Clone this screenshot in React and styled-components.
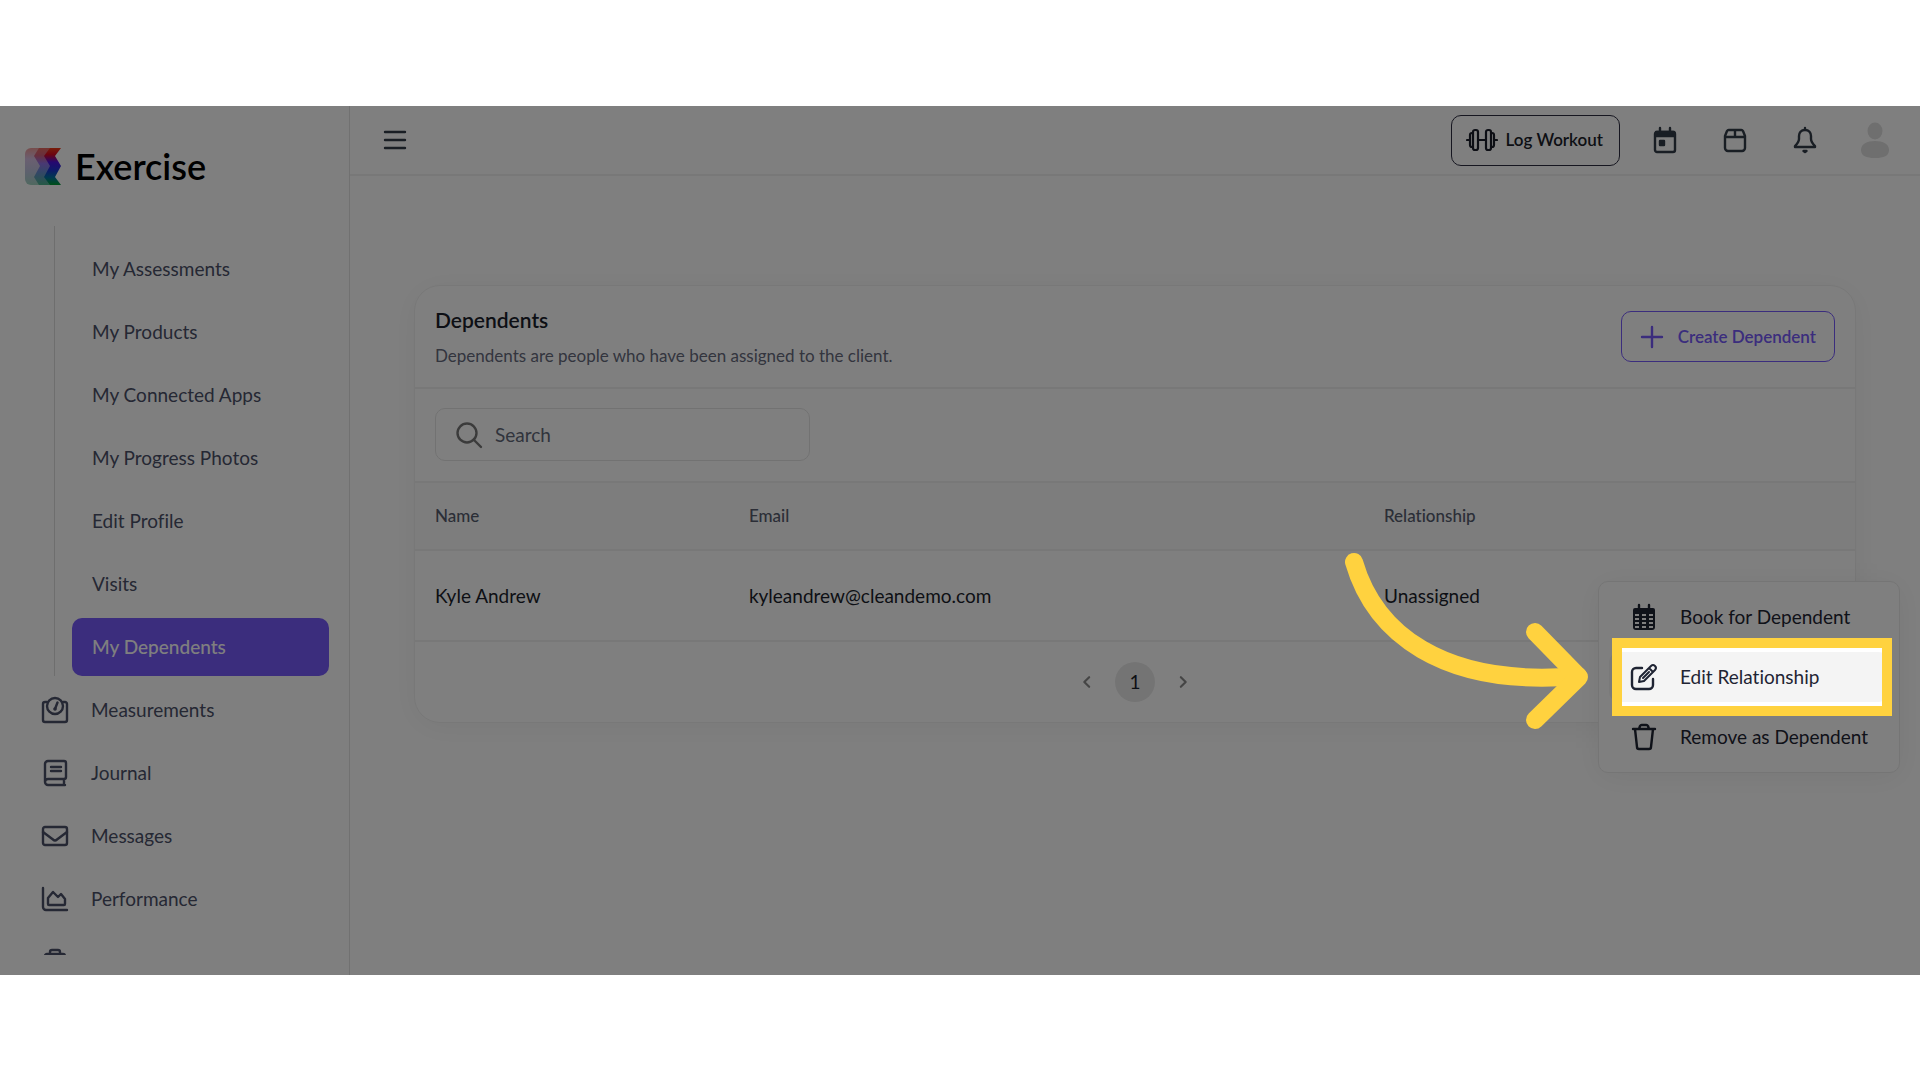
import React from "react";
import styled, { createGlobalStyle, css } from "styled-components";

const GlobalStyle = createGlobalStyle`
  * {
    box-sizing: border-box;
  }
  body {
    margin: 0;
    background: #ffffff;
    font-family: Lato, "Open Sans", sans-serif;
    font-size: 19px;
    line-height: 24px;
    font-variant-ligatures: none;
    color: #1b1e2b;
  }
  button,
  input {
    font: inherit;
    font-variant-ligatures: none;
    color: inherit;
  }
  h1,
  p,
  ul {
    margin: 0;
    padding: 0;
  }
`;

/* ---------- icons ---------- */

const Icon = ({ size = 26, stroke = 2.4, children }) => (
  <svg
    width={size}
    height={size}
    viewBox="0 0 26 26"
    fill="none"
    stroke="currentColor"
    strokeWidth={stroke}
    strokeLinecap="round"
    strokeLinejoin="round"
    overflow="visible"
    aria-hidden="true"
  >
    {children}
  </svg>
);

const LogoMark = () => (
  <svg width="36" height="37" viewBox="0 0 36 37" aria-hidden="true">
    <defs>
      <linearGradient id="bandOne" x1="0" y1="0" x2="0" y2="1">
        <stop offset="0" stopColor="#ee9a98" />
        <stop offset="0.3" stopColor="#d6bfe2" />
        <stop offset="0.65" stopColor="#bcc2dc" />
        <stop offset="1" stopColor="#a0d2c0" />
      </linearGradient>
      <linearGradient id="bandTwo" x1="0" y1="0" x2="0" y2="1">
        <stop offset="0" stopColor="#e8685e" />
        <stop offset="0.2" stopColor="#d0607c" />
        <stop offset="0.42" stopColor="#9272e8" />
        <stop offset="0.65" stopColor="#688cd0" />
        <stop offset="1" stopColor="#4cb48c" />
      </linearGradient>
      <linearGradient id="bandThree" x1="0" y1="0" x2="0" y2="1">
        <stop offset="0" stopColor="#f03a14" />
        <stop offset="0.18" stopColor="#d80820" />
        <stop offset="0.38" stopColor="#4c10e0" />
        <stop offset="0.6" stopColor="#1c34d4" />
        <stop offset="0.8" stopColor="#0074a0" />
        <stop offset="1" stopColor="#00a030" />
      </linearGradient>
    </defs>
    <path d="M6 0H24V37H6a6 6 0 0 1-6-6V6a6 6 0 0 1 6-6z" fill="url(#bandOne)" />
    <path d="M14 0H30V37H14L9 29 15 18 9 8z" fill="url(#bandTwo)" />
    <path d="M25 0H36L30 8 36 18 30 29 36 37H25L19 29 25 18 19 8z" fill="url(#bandThree)" />
  </svg>
);

const MenuIcon = () => (
  <Icon>
    <path d="M3 5h20M3 13h20M3 21h20" />
  </Icon>
);

const DumbbellIcon = () => (
  <svg
    width="32"
    height="24"
    viewBox="0 0 32 24"
    fill="none"
    stroke="currentColor"
    strokeWidth="2.2"
    strokeLinecap="round"
    aria-hidden="true"
  >
    <rect x="7" y="2" width="5" height="20" rx="2" />
    <rect x="20" y="2" width="5" height="20" rx="2" />
    <path d="M12 12h8M1 12h2M29 12h2M7 5H6a2 2 0 0 0-2 2v10a2 2 0 0 0 2 2h1M25 5h1a2 2 0 0 1 2 2v10a2 2 0 0 1-2 2h-1" />
  </svg>
);

const CalendarDayIcon = () => (
  <Icon>
    <rect x="3" y="5" width="20" height="20" rx="2" />
    <path d="M8 1v4M18 1v4" />
    <path d="M4 5h18v4H4z" fill="currentColor" />
    <path d="M8 14h4v4H8z" fill="currentColor" />
  </Icon>
);

const BoxIcon = () => (
  <Icon>
    <path d="M3 9v12a3 3 0 0 0 3 3h14a3 3 0 0 0 3-3V9l-2-5a2 2 0 0 0-2-1H7a2 2 0 0 0-2 1zM3 10h20M13 3v7" />
  </Icon>
);

const BellIcon = () => (
  <Icon>
    <path d="M13 1v2M13 3c-4 0-6 3-6 6v3c0 3-2 5-4 7v1h20v-1c-2-2-4-4-4-7V9c0-3-2-6-6-6z" />
    <path d="M11.500 24h3l-1.500 1z" fill="currentColor" />
  </Icon>
);

const AvatarIcon = () => (
  <svg width="28" height="36" viewBox="0 0 28 36" fill="#dedede" aria-hidden="true">
    <ellipse cx="14" cy="9" rx="7.500" ry="8.500" />
    <path d="M0 28c0-6 6-9 14-9s14 3 14 9-5 8-14 8-14-2-14-8z" />
  </svg>
);

const ScaleIcon = () => (
  <Icon>
    <path d="M5 5H3a2 2 0 0 0-2 2v16a2 2 0 0 0 2 2h20a2 2 0 0 0 2-2V7a2 2 0 0 0-2-2h-2" />
    <circle cx="13" cy="9" r="8" />
    <path d="M15.500 5.500L13 12" />
    <circle cx="13" cy="12" r="0.600" fill="currentColor" />
  </Icon>
);

const JournalIcon = () => (
  <Icon>
    <path d="M23 25H6a3 3 0 0 1-3-3V4a3 3 0 0 1 3-3h16a2 2 0 0 1 2 2v14a2 2 0 0 1-2 2H6a3 3 0 0 0-3 3M22 19v6" />
    <path d="M9 7h10M9 11h10" />
  </Icon>
);

const MailIcon = () => (
  <Icon>
    <rect x="1" y="4" width="24" height="18" rx="2" />
    <path d="M1 9l10 7.500a3 3 0 0 0 4 0L25 9" />
  </Icon>
);

const ChartIcon = () => (
  <Icon>
    <path d="M1 2v19a3 3 0 0 0 3 3h21" />
    <path d="M6 18v-6l5-6 5 5 3-3 4 5v5a1 1 0 0 1-1 1H7a1 1 0 0 1-1-1z" />
  </Icon>
);

const ClipboardIcon = () => (
  <Icon>
    <path d="M8 5V3a2 2 0 0 1 2-2h6a2 2 0 0 1 2 2v2M5 5h16a2 2 0 0 1 2 2v16a2 2 0 0 1-2 2H5a2 2 0 0 1-2-2V7a2 2 0 0 1 2-2z" />
  </Icon>
);

const PlusIcon = () => (
  <Icon>
    <path d="M13 3v20M3 13h20" />
  </Icon>
);

const SearchIcon = () => (
  <Icon>
    <circle cx="11" cy="11" r="9.500" />
    <path d="M17.500 17.500L25 25" />
  </Icon>
);

const CalendarGridIcon = () => (
  <Icon>
    <path
      d="M4 4h18a2 2 0 0 1 2 2v17a3 3 0 0 1-3 3H5a3 3 0 0 1-3-3V6a2 2 0 0 1 2-2z"
      fill="currentColor"
      stroke="none"
    />
    <path d="M8 1v4M18 1v4" />
    <path
      d="M4 11h4M11 11h4M18 11h4M4 15h4M11 15h4M18 15h4M4 19h4M11 19h4M18 19h4M4 23h4M11 23h4M18 23h4"
      stroke="#ffffff"
      strokeWidth="1.800"
      strokeLinecap="butt"
    />
  </Icon>
);

const EditIcon = () => (
  <Icon>
    <path d="M11 4H5a4 4 0 0 0-4 4v13a4 4 0 0 0 4 4h13a4 4 0 0 0 4-4v-6" />
    <path d="M8 18l1-5L20 2a2.500 2.500 0 0 1 4 4L13 17zM18 4l4 4M12 14l6-6" strokeWidth="2" />
  </Icon>
);

const TrashIcon = () => (
  <Icon>
    <path d="M2 5h22M4 5l2 18a2 2 0 0 0 2 2h10a2 2 0 0 0 2-2l2-18M8 5l1-3a2 2 0 0 1 2-1h4a2 2 0 0 1 2 1l1 3" />
  </Icon>
);

const ChevronLeft = () => (
  <Icon size={14} stroke={4}>
    <path d="M17 4l-9 9 9 9" />
  </Icon>
);

const ChevronRight = () => (
  <Icon size={14} stroke={4}>
    <path d="M9 4l9 9-9 9" />
  </Icon>
);

/* ---------- data ---------- */

const subLinks = [
  "My Assessments",
  "My Products",
  "My Connected Apps",
  "My Progress Photos",
  "Edit Profile",
  "Visits",
  "My Dependents",
];

const mainLinks = [
  { label: "Measurements", icon: <ScaleIcon /> },
  { label: "Journal", icon: <JournalIcon /> },
  { label: "Messages", icon: <MailIcon /> },
  { label: "Performance", icon: <ChartIcon /> },
];

const dependents = [
  { name: "Kyle Andrew", email: "kyleandrew@cleandemo.com", relationship: "Unassigned" },
];

const App = () => {
  return (
    <>
      <GlobalStyle />
      <Page>
        <Stage>
          <Sidebar>
            <Brand href="#">
              <LogoMark />
              Exercise
            </Brand>
            <Nav aria-label="Main">
              <SubList>
                {subLinks.map((label) => (
                  <li key={label}>
                    <SubLink href="#" $active={label === "My Dependents"}>
                      {label}
                    </SubLink>
                  </li>
                ))}
              </SubList>
              <MainList>
                {mainLinks.map(({ label, icon }) => (
                  <li key={label}>
                    <MainLink href="#">
                      {icon}
                      {label}
                    </MainLink>
                  </li>
                ))}
                <li>
                  <MainLink href="#" aria-label="More">
                    <ClipboardIcon />
                  </MainLink>
                </li>
              </MainList>
            </Nav>
          </Sidebar>

          <Content>
            <Topbar>
              <IconButton aria-label="Toggle menu">
                <MenuIcon />
              </IconButton>
              <TopActions>
                <OutlineButton>
                  <DumbbellIcon />
                  Log Workout
                </OutlineButton>
                <IconGroup>
                  <IconButton aria-label="Calendar">
                    <CalendarDayIcon />
                  </IconButton>
                  <IconButton aria-label="Packages">
                    <BoxIcon />
                  </IconButton>
                  <IconButton aria-label="Notifications">
                    <BellIcon />
                  </IconButton>
                  <IconButton aria-label="Account">
                    <AvatarIcon />
                  </IconButton>
                </IconGroup>
              </TopActions>
            </Topbar>

            <Main>
              <Card>
                <CardHeader>
                  <div>
                    <Title>Dependents</Title>
                    <Subtitle>Dependents are people who have been assigned to the client.</Subtitle>
                  </div>
                  <OutlineButton $primary>
                    <PlusIcon />
                    Create Dependent
                  </OutlineButton>
                </CardHeader>
                <Toolbar>
                  <SearchBox>
                    <SearchIcon />
                    <SearchInput type="text" placeholder="Search" aria-label="Search" />
                  </SearchBox>
                </Toolbar>
                <Table>
                  <colgroup>
                    <Col $width="21.8%" />
                    <Col $width="44.1%" />
                    <Col />
                  </colgroup>
                  <thead>
                    <tr>
                      <Th scope="col">Name</Th>
                      <Th scope="col">Email</Th>
                      <Th scope="col">Relationship</Th>
                    </tr>
                  </thead>
                  <tbody>
                    {dependents.map((row) => (
                      <tr key={row.email}>
                        <Td>{row.name}</Td>
                        <Td>{row.email}</Td>
                        <Td>{row.relationship}</Td>
                      </tr>
                    ))}
                  </tbody>
                </Table>
                <Pagination aria-label="Pagination">
                  <PageButton aria-label="Previous page">
                    <ChevronLeft />
                  </PageButton>
                  <PageButton $current aria-current="page">
                    1
                  </PageButton>
                  <PageButton aria-label="Next page">
                    <ChevronRight />
                  </PageButton>
                </Pagination>
              </Card>
            </Main>
          </Content>

          <ActionMenu>
            <MenuItem>
              <CalendarGridIcon />
              Book for Dependent
            </MenuItem>
            <MenuItem $hovered>
              <EditIcon />
              Edit Relationship
              <Spotlight>
                <Arrow viewBox="0 0 252 190" aria-hidden="true">
                  <path d="M14 16C34 85 100 142 238 130" />
                  <path d="M195 86L239 131L195 174" />
                </Arrow>
              </Spotlight>
            </MenuItem>
            <MenuItem>
              <TrashIcon />
              Remove as Dependent
            </MenuItem>
          </ActionMenu>
        </Stage>
      </Page>
    </>
  );
};

export default App;

/* ---------- layout ---------- */

const line = "#f0f0f0";
const purple = "#765afa";

const Page = styled.div`
  height: 100vh;
  padding: 106px 0 105px;
  display: flex;
`;

const Stage = styled.div`
  position: relative;
  flex: 1;
  display: flex;
  min-width: 0;
  overflow: hidden;
`;

const Sidebar = styled.aside`
  width: 350px;
  flex-shrink: 0;
  display: flex;
  flex-direction: column;
  padding-bottom: 20px;
  border-right: 1px solid #e2e2e2;
`;

const Brand = styled.a`
  height: 120px;
  flex-shrink: 0;
  display: flex;
  align-items: center;
  gap: 14px;
  padding-left: 25px;
  font-size: 36px;
  line-height: 40px;
  font-weight: 600;
  color: #000000;
  text-decoration: none;
`;

const Nav = styled.nav`
  flex: 1;
  min-height: 0;
  overflow: hidden;
  color: #4b5068;
`;

const SubList = styled.ul`
  list-style: none;
  margin-left: 54px;
  padding: 14px 20px 0 17px;
  border-left: 1px solid #dcdcdc;
`;

const MainList = styled.ul`
  list-style: none;
  padding: 0 20px 0 42px;
`;

const navLink = css`
  display: flex;
  align-items: center;
  height: 58px;
  margin-bottom: 5px;
  color: inherit;
  text-decoration: none;
`;

const SubLink = styled.a`
  ${navLink}
  padding: 0 20px;
  border-radius: 10px;
  ${({ $active }) =>
    $active &&
    css`
      background: ${purple};
      color: #ffffff;
      font-weight: 500;
    `}
`;

const MainLink = styled.a`
  ${navLink}
  gap: 23px;
`;

const Content = styled.div`
  flex: 1;
  min-width: 0;
  display: flex;
  flex-direction: column;
`;

const Topbar = styled.header`
  height: 70px;
  display: flex;
  align-items: center;
  justify-content: space-between;
  padding: 0 25px;
  border-bottom: 2px solid ${line};
`;

const TopActions = styled.div`
  display: flex;
  align-items: center;
  gap: 25px;
`;

const IconGroup = styled.div`
  display: flex;
  gap: 30px;
`;

const IconButton = styled.button`
  width: 40px;
  height: 40px;
  display: flex;
  align-items: center;
  justify-content: center;
  padding: 0;
  border: 0;
  background: none;
  color: #323c48;
`;

const OutlineButton = styled.button`
  height: 51px;
  display: flex;
  align-items: center;
  gap: 8px;
  padding: 0 16px 0 14px;
  border: 1px solid #2c2c40;
  border-radius: 10px;
  background: #ffffff;
  color: #1b1e2b;
  font-size: 17px;
  font-weight: 600;
  ${({ $primary }) =>
    $primary &&
    css`
      gap: 13px;
      padding: 0 18px 0 17px;
      border-color: ${purple};
      color: ${purple};
    `}
`;

const Main = styled.main`
  padding: 109px 64px 0;
`;

const Card = styled.section`
  border: 1px solid #f0f0f0;
  border-radius: 26px;
  box-shadow: 0 4px 30px rgba(0, 0, 0, 0.05);
  overflow: hidden;
`;

const CardHeader = styled.div`
  height: 103px;
  display: flex;
  align-items: center;
  justify-content: space-between;
  padding: 0 20px;
  border-bottom: 2px solid ${line};
`;

const Title = styled.h1`
  font-size: 21px;
  line-height: 28px;
  font-weight: 600;
  margin-bottom: 10px;
`;

const Subtitle = styled.p`
  font-size: 17px;
  color: #666a7d;
`;

const Toolbar = styled.div`
  padding: 19px 20px 20px;
  border-bottom: 2px solid ${line};
`;

const SearchBox = styled.div`
  width: 375px;
  height: 53px;
  display: flex;
  align-items: center;
  gap: 13px;
  padding: 0 20px;
  border: 1px solid #e4e4e4;
  border-radius: 10px;
  color: #777777;
`;

const SearchInput = styled.input`
  flex: 1;
  min-width: 0;
  padding: 0;
  border: 0;
  outline: 0;
  background: none;
  &::placeholder {
    color: #626879;
    opacity: 1;
  }
`;

const Table = styled.table`
  width: 100%;
  table-layout: fixed;
  border-collapse: separate;
  border-spacing: 0;
`;

const Col = styled.col`
  width: ${({ $width }) => $width || "auto"};
`;

const Th = styled.th`
  height: 68px;
  padding: 0 20px;
  border-bottom: 2px solid ${line};
  background: #fafafa;
  text-align: left;
  font-size: 17px;
  font-weight: 500;
  color: #565c6e;
`;

const Td = styled.td`
  height: 91px;
  padding: 0 20px;
  border-bottom: 2px solid ${line};
`;

const Pagination = styled.nav`
  height: 80px;
  display: flex;
  align-items: center;
  justify-content: center;
  gap: 8px;
`;

const PageButton = styled.button`
  width: 40px;
  height: 40px;
  display: flex;
  align-items: center;
  justify-content: center;
  padding: 0;
  border: 0;
  border-radius: 50%;
  background: ${({ $current }) => ($current ? "#e9e9e9" : "none")};
  color: ${({ $current }) => ($current ? "#1b1e2b" : "#8a8a8a")};
`;

/* dropdown that opens over the table row */
const ActionMenu = styled.div`
  position: absolute;
  top: 475px;
  right: 20px;
  width: 302px;
  display: flex;
  flex-direction: column;
  gap: 10px;
  padding: 10px;
  border: 1px solid #ebebeb;
  border-radius: 10px;
  background: #ffffff;
  box-shadow: 0 4px 30px rgba(0, 0, 0, 0.06);
`;

const MenuItem = styled.button`
  position: relative;
  height: 50px;
  display: flex;
  align-items: center;
  gap: 23px;
  padding: 0 22px;
  border: 0;
  border-radius: 10px;
  background: ${({ $hovered }) => ($hovered ? "#f4f4f4" : "#ffffff")};
  color: #1f2433;
  white-space: nowrap;
  z-index: ${({ $hovered }) => ($hovered ? 1 : 0)};
`;

/* the wide shadow dims everything outside the frame */
const Spotlight = styled.span`
  position: absolute;
  inset: -14px -3px -14px 3px;
  border: 10px solid #ffd23f;
  box-shadow: 0 0 0 3000px rgba(0, 0, 0, 0.5);
`;

const Arrow = styled.svg`
  position: absolute;
  left: -282px;
  top: -102px;
  width: 252px;
  height: 190px;
  fill: none;
  stroke: #ffd23f;
  stroke-width: 18px;
  stroke-linecap: round;
  stroke-linejoin: round;
`;
